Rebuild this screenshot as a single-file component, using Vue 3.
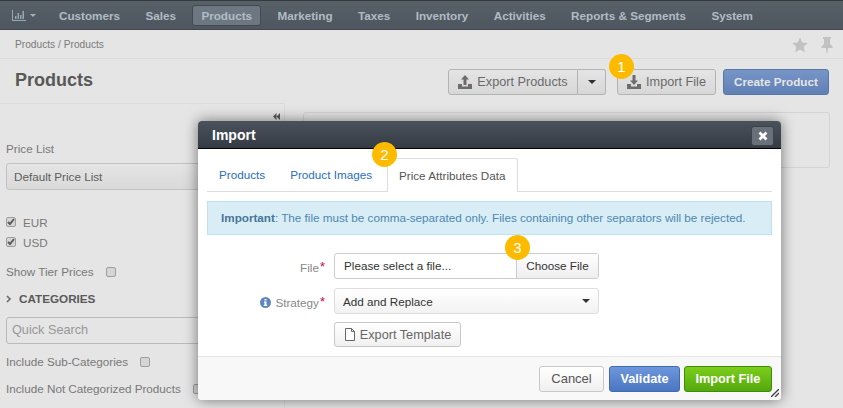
<template>
  <div class="page">
    <!-- top navigation -->
    <nav class="topnav">
      <span class="nav-logo">
        <svg width="14" height="11" viewBox="0 0 14 11"><path d="M0 0h1v10h13v1H0zM3 6h1.500v3H3zM5.500 3H7v6H5.500zM8 5h1.500v4H8zM10.500 1H12v8h-1.500z" fill="#a9bcc9"/></svg>
        <i class="nav-caret"></i>
      </span>
      <a v-for="item in navItems" :key="item" class="nav-item" :class="{ active: item === 'Products' }">{{ item }}</a>
    </nav>

    <!-- breadcrumbs -->
    <div class="crumbs">
      <span>Products / Products</span>
      <div class="crumb-icons">
        <svg width="16" height="16" viewBox="0 0 16 16"><path d="M8 .5l2.300 5 5.400.6-4 3.700 1.100 5.400L8 12.500l-4.800 2.700 1.100-5.400-4-3.700 5.400-.6z" fill="#d8d8d8"/></svg>
        <svg width="12" height="16" viewBox="0 0 12 16"><path d="M2 0h8v2H9v5l2.500 2.500V11H7l-.6 5h-.8L5 11H.5V9.500L3 7V2H2z" fill="#d8d8d8"/></svg>
      </div>
    </div>

    <!-- title row -->
    <header class="title-row">
      <h1>Products</h1>
      <div class="actions">
        <div class="btn-group">
          <button class="btn export">
            <svg width="14" height="14" viewBox="0 0 14 14"><path d="M7 0l4 4.500H8.500V10h-3V4.500H3zM0 9h4v2.500h6V9h4v5H0z" fill="#7a7a7a"/></svg>
            Export Products
          </button>
          <button class="btn caret-btn"><i class="caret"></i></button>
        </div>
        <button class="btn import">
          <svg width="14" height="14" viewBox="0 0 14 14"><path d="M5.500 0h3v5.500H11L7 10 3 5.500h2.500zM0 9h4v2.500h6V9h4v5H0z" fill="#7a7a7a"/></svg>
          Import File
        </button>
        <button class="btn create">Create Product</button>
      </div>
    </header>

    <div class="content">
      <aside class="sidebar">
        <div class="collapse">
          <svg width="7" height="7" viewBox="0 0 7 7"><path d="M3.500 0v7L0 3.500zM7 0v7L3.500 3.500z" fill="#666"/></svg>
        </div>
        <label class="side-label">Price List</label>
        <div class="side-select">Default Price List</div>
        <div class="check-row first"><span class="check on"><svg width="8" height="8" viewBox="0 0 8 8"><path d="M1 4l2 2 4-5" fill="none" stroke="#666" stroke-width="2"/></svg></span>EUR</div>
        <div class="check-row"><span class="check on"><svg width="8" height="8" viewBox="0 0 8 8"><path d="M1 4l2 2 4-5" fill="none" stroke="#666" stroke-width="2"/></svg></span>USD</div>
        <div class="opt-row tier">Show Tier Prices <span class="check"></span></div>
        <div class="cat-head">
          <svg width="6" height="8" viewBox="0 0 6 8"><path d="M1 1l3 3-3 3" fill="none" stroke="#777" stroke-width="1.600"/></svg>
          CATEGORIES
        </div>
        <div class="side-search">Quick Search</div>
        <div class="opt-row sub">Include Sub-Categories <span class="check"></span></div>
        <div class="opt-row notcat">Include Not Categorized Products <span class="check"></span></div>
      </aside>
      <main class="main">
        <div class="panel"></div>
      </main>
    </div>

    <div class="overlay"></div>

    <!-- import dialog -->
    <section class="modal">
      <div class="modal-head">
        <span>Import</span>
        <button class="close">
          <svg width="10" height="10" viewBox="0 0 10 10"><path d="M1.500 1.500l7 7M8.500 1.500l-7 7" stroke="#fff" stroke-width="2.800"/></svg>
        </button>
      </div>
      <div class="modal-body">
        <div class="tabs">
          <a class="tab">Products</a>
          <a class="tab">Product Images</a>
          <a class="tab current">Price Attributes Data</a>
        </div>
        <div class="notice"><b>Important</b>: The file must be comma-separated only. Files containing other separators will be rejected.</div>
        <div class="form-row file-row">
          <label class="form-label"><span>File</span><em>*</em></label>
          <div class="file-input">
            <span class="file-name">Please select a file...</span>
            <span class="file-btn">Choose File</span>
          </div>
        </div>
        <div class="form-row strategy-row">
          <label class="form-label">
            <svg class="info" width="11" height="11" viewBox="0 0 11 11"><circle cx="5.500" cy="5.500" r="5.500" fill="#5d86c0"/><path d="M4.500 2h2v1.600h-2zM4 4.500h2.500v3.200h.7V9H3.800V7.700h.7V5.800H4z" fill="#fff"/></svg>
            <span>Strategy</span><em>*</em>
          </label>
          <div class="strategy-select">Add and Replace <i class="caret"></i></div>
        </div>
        <div class="form-row">
          <span class="form-label"></span>
          <button class="btn template">
            <svg width="12" height="13" viewBox="0 0 12 13"><path d="M1.500.5h6l3 3v9h-9zM7.500.5v3h3" fill="#fff" stroke="#666"/></svg>
            Export Template
          </button>
        </div>
      </div>
      <div class="modal-foot">
        <button class="btn cancel">Cancel</button>
        <button class="btn validate">Validate</button>
        <button class="btn run">Import File</button>
        <svg class="grip" width="8" height="8" viewBox="0 0 8 8"><path d="M0 8l8-8M4 8l4-4" stroke="#444" stroke-width="1.400"/></svg>
      </div>
    </section>

    <span v-for="b in badges" :key="b.n" class="badge" :class="'badge-' + b.n">{{ b.n }}</span>
  </div>
</template>

<script setup>
const navItems = ['Customers', 'Sales', 'Products', 'Marketing', 'Taxes', 'Inventory', 'Activities', 'Reports & Segments', 'System']
const badges = [{ n: 1 }, { n: 2 }, { n: 3 }]
</script>

<style>
html, body {
  margin: 0;
  overflow: hidden;
}
</style>

<style scoped>
.page {
  position: relative;
  width: 843px;
  height: 408px;
  overflow: hidden;
  background: #fff;
  font-family: "Liberation Sans", Arial, sans-serif;
  font-size: 11.7px;
  color: #555;
}

button {
  font-family: inherit;
}

/* nav */
.topnav {
  display: flex;
  align-items: center;
  gap: 7.4px;
  height: 30px;
  padding-left: 12px;
  box-sizing: border-box;
  border-top: 1px solid #3a4147;
  background: linear-gradient(#626b74, #57606a);
  border-bottom: 1px solid #4a5157;
}

.nav-logo {
  display: flex;
  align-items: center;
  gap: 4px;
  width: 30.600px;
}

.nav-caret {
  border: 3px solid transparent;
  border-top: 3px solid #b9c6cf;
  border-bottom: 0;
}

.nav-item {
  padding: 0 8px;
  height: 21px;
  box-sizing: border-box;
  font-weight: bold;
  color: #c3d1dc;
  border-radius: 3px;
  line-height: 19px;
  border: 1px solid transparent;
  white-space: nowrap;
}

.nav-item.active {
  background: #7a8590;
  border-color: #4b5258;
}

/* breadcrumb */
.crumbs {
  display: flex;
  justify-content: space-between;
  align-items: center;
  height: 28px;
  padding: 0 10px 0 15px;
  font-size: 10.2px;
  color: #8a8a8a;
  border-bottom: 1px solid #f4f4f4;
}

.crumb-icons {
  display: flex;
  gap: 13px;
  align-items: center;
  margin-top: 1px;
}

/* page title */
.title-row {
  display: flex;
  justify-content: space-between;
  align-items: center;
  height: 44px;
  padding: 0 14px 2px 15px;
  box-sizing: border-box;
}

h1 {
  margin: 0;
  font-size: 18px;
  color: #636363;
}

.actions {
  display: flex;
  margin-top: 3px;
}

.btn-group {
  display: flex;
}

.btn {
  display: inline-flex;
  align-items: center;
  justify-content: center;
  box-sizing: border-box;
  height: 26px;
  gap: 5px;
  border: 1px solid #c8c8c8;
  border-radius: 3px;
  background: linear-gradient(#fff, #f0f0f0);
  font-size: 12.7px;
  color: #777;
  padding: 0;
}

.export {
  width: 130px;
  border-radius: 3px 0 0 3px;
}

.caret-btn {
  width: 28px;
  border-left: 0;
  border-radius: 0 3px 3px 0;
}

.caret {
  display: inline-block;
  border: 4px solid transparent;
  border-top: 4px solid #333;
  border-bottom: 0;
}

.import {
  width: 99px;
  margin-left: 11px;
}

.create {
  width: 106px;
  margin-left: 7px;
  border-color: #6485b8;
  background: linear-gradient(#86a6de, #6b8fca);
  color: #fff;
  font-size: 11.7px;
  font-weight: bold;
}

/* sidebar */
.content {
  display: flex;
}

.sidebar {
  width: 285px;
  box-sizing: border-box;
  height: 305px;
  padding: 0 0 0 6px;
  border-top: 1px solid #f4f4f4;
  border-right: 1px solid #f4f4f4;
  color: #888;
}

.collapse {
  display: flex;
  justify-content: flex-end;
  height: 7px;
  padding: 9px 4px 0 0;
}

.side-label {
  display: block;
  margin-top: 22px;
  line-height: 14px;
}

.side-select {
  width: 250px;
  box-sizing: border-box;
  height: 27px;
  margin-top: 7px;
  padding-left: 7px;
  line-height: 25px;
  border: 1px solid #d8d8d8;
  border-radius: 3px;
  background: linear-gradient(#fff, #f2f2f2);
  color: #6a6a6a;
}

.check-row {
  display: flex;
  align-items: center;
  gap: 7px;
  height: 20px;
}

.check-row.first {
  margin-top: 22px;
}

.check {
  display: inline-flex;
  align-items: center;
  justify-content: center;
  box-sizing: border-box;
  width: 10px;
  height: 10px;
  border: 1px solid #b0b0b0;
  border-radius: 2px;
  background: #eee;
}

.opt-row {
  white-space: nowrap;
  line-height: 14px;
}

.opt-row .check {
  vertical-align: -1px;
  margin-left: 9px;
}

.tier {
  margin-top: 13px;
}

.cat-head {
  display: flex;
  align-items: center;
  gap: 7px;
  margin-top: 13px;
  line-height: 14px;
  font-weight: bold;
  color: #666;
}

.side-search {
  width: 250px;
  box-sizing: border-box;
  height: 27px;
  margin-top: 11px;
  padding-left: 5px;
  line-height: 25px;
  font-size: 12.7px;
  color: #aaa;
  border: 1px solid #d0d0d0;
  border-radius: 3px;
  background: #fff;
}

.sub {
  margin-top: 11px;
}

.notcat {
  margin-top: 13px;
}

/* main panel */
.main {
  flex: 1;
  padding: 9px 13px 0 18px;
}

.panel {
  height: 54px;
  border: 1px solid #ececec;
  border-radius: 3px;
}

.overlay {
  position: absolute;
  inset: 0;
  background: rgba(0, 0, 0, 0.1);
}

/* modal */
.modal {
  position: absolute;
  left: 198px;
  top: 121px;
  width: 583px;
  height: 279px;
  display: flex;
  flex-direction: column;
  background: #fff;
  border-radius: 4px;
  box-shadow: 0 0 14px rgba(0, 0, 0, 0.5);
}

.modal-head {
  display: flex;
  justify-content: space-between;
  align-items: center;
  box-sizing: border-box;
  height: 28px;
  padding: 0 7px 0 14px;
  border-radius: 4px 4px 0 0;
  border-bottom: 1px solid #000;
  background: linear-gradient(#4a525c, #343b44);
  color: #fff;
  font-size: 14px;
  font-weight: bold;
}

.close {
  display: flex;
  align-items: center;
  justify-content: center;
  width: 23px;
  height: 20px;
  padding: 0;
  margin-top: 2px;
  background: #68707a;
  border: 1px solid #3c434b;
  border-radius: 3px;
}

.modal-body {
  flex: 1;
  padding: 9px 9px 0;
}

.tabs {
  display: flex;
  height: 34px;
  box-sizing: border-box;
  border-bottom: 1px solid #ddd;
}

.tab {
  padding: 0 12px;
  line-height: 33px;
  color: #2a6ec0;
  white-space: nowrap;
}

.tab + .tab {
  padding-left: 13px;
}

.tab.current {
  height: 34px;
  box-sizing: border-box;
  margin-left: 3px;
  padding: 0 11px;
  color: #555;
  background: #fff;
  border: 1px solid #ddd;
  border-bottom: 0;
  border-radius: 3px 3px 0 0;
}

.notice {
  box-sizing: border-box;
  height: 34px;
  margin-top: 9px;
  padding-left: 13px;
  line-height: 32px;
  border: 1px solid #bde3f2;
  background: #d9edf7;
  color: #4d88b0;
  white-space: nowrap;
}

.notice b {
  color: #48769a;
}

.form-row {
  display: flex;
  align-items: center;
}

.form-label {
  display: flex;
  align-items: center;
  justify-content: flex-end;
  width: 118px;
  margin-right: 9px;
  padding-top: 2px;
  box-sizing: border-box;
  color: #888;
}

.form-label em {
  margin-left: 1px;
  color: #d6004f;
  font-style: normal;
  align-self: flex-start;
  font-size: 13px;
  line-height: 12px;
}

.info {
  margin-right: 4px;
}

.file-row {
  margin-top: 18px;
}

.file-input {
  display: flex;
  box-sizing: border-box;
  width: 265px;
  height: 26px;
  border: 1px solid #ccc;
  border-radius: 3px;
  line-height: 24px;
}

.file-name {
  flex: 1;
  padding-left: 9px;
  color: #333;
}

.file-btn {
  width: 81px;
  text-align: center;
  border-left: 1px solid #ccc;
  background: linear-gradient(#fff, #eee);
  color: #333;
}

.strategy-row {
  margin-top: 9px;
}

.strategy-select {
  display: flex;
  justify-content: space-between;
  align-items: center;
  box-sizing: border-box;
  width: 265px;
  height: 26px;
  padding: 0 8px 0 8px;
  border: 1px solid #ddd;
  border-radius: 3px;
  background: linear-gradient(#fff, #f2f2f2);
  color: #333;
}

.template {
  width: 127px;
  height: 25px;
  margin-top: 8px;
  gap: 4px;
  color: #666;
}

.modal-foot {
  position: relative;
  display: flex;
  justify-content: flex-end;
  align-items: center;
  gap: 5px;
  box-sizing: border-box;
  height: 44px;
  padding: 0 9px 0 0;
  border-top: 1px solid #e5e5e5;
  background: #f8f8f8;
  border-radius: 0 0 4px 4px;
}

.cancel {
  width: 65px;
  font-size: 13px;
  color: #555;
}

.validate {
  width: 71px;
  font-size: 12.7px;
  font-weight: bold;
  color: #fff;
  border-color: #3f6cad;
  background: linear-gradient(#6d97dc, #4a76c2);
}

.run {
  width: 88px;
  margin-left: -1px;
  font-size: 12.7px;
  font-weight: bold;
  color: #fff;
  border-color: #3c8c0c;
  background: linear-gradient(#7bce1c, #55a80c);
}

.grip {
  position: absolute;
  right: 2px;
  bottom: 3px;
}

/* numbered callouts */
.badge {
  position: absolute;
  width: 25px;
  height: 25px;
  border-radius: 50%;
  background: #fdbb00;
  color: #fff;
  font-size: 15px;
  line-height: 25px;
  text-align: center;
}

.badge-1 {
  left: 609px;
  top: 54px;
}

.badge-2 {
  left: 372px;
  top: 142px;
}

.badge-3 {
  left: 505px;
  top: 235px;
}
</style>
